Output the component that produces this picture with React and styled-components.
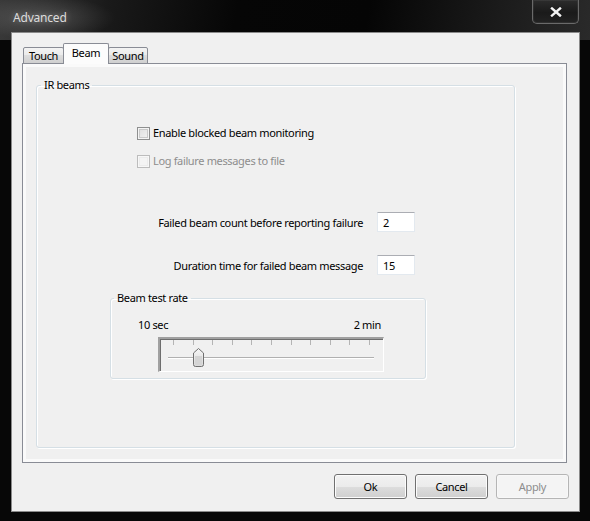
import React from "react";
import styled, { createGlobalStyle } from "styled-components";

const GlobalStyle = createGlobalStyle`
  html, body { margin: 0; padding: 0; background: #000; }
  body { font-family: "Noto Sans", "Open Sans", sans-serif; font-size: 11px; letter-spacing: -0.35px; color: #000; }
  * { box-sizing: border-box; }
`;

const Frame = styled.div`
  width: 590px;
  height: 521px;
  display: flex;
  flex-direction: column;
  padding: 0 10px 9px 11px;
  background:
    radial-gradient(ellipse 70px 22px at 45px 18px, rgba(255,255,255,0.16), rgba(255,255,255,0) 100%),
    linear-gradient(100deg, #3a3a3a 0%, #1a1a1a 18%, #060606 40%, #050505 62%, #1c1c1c 85%, #2a2a2a 100%) top / 100% 40px no-repeat,
    #070707;
`;

const TitleBar = styled.div`
  height: 32px;
  display: flex;
  align-items: flex-start;
  justify-content: space-between;
  padding: 0 1px 0 2px;
`;

const Title = styled.div`
  margin-top: 10px;
  font-size: 12px;
  line-height: 16px;
  letter-spacing: -0.2px;
  color: #dcdcdc;
  text-shadow: 0 0 6px rgba(255,255,255,0.35);
`;

const CloseButton = styled.div`
  width: 47px;
  height: 24px;
  display: flex;
  align-items: center;
  justify-content: center;
  border: 1px solid #6a6a6a;
  border-top: none;
  border-radius: 0 0 5px 5px;
  background: linear-gradient(#2c2c2c, #1a1a1a 55%, #232323);
  box-shadow: inset 0 0 0 1px rgba(255,255,255,0.06);
`;

const Client = styled.div`
  flex: 1;
  display: flex;
  flex-direction: column;
  border: 1px solid #8a8a8a;
  background: #f0f0f0;
  padding: 10px 12px 12px 10px;
`;

const TabStrip = styled.div`
  height: 21px;
  display: flex;
  align-items: flex-end;
  padding-left: 1px;
  position: relative;
  z-index: 1;
  margin-bottom: -1px;
`;

const Tab = styled.div`
  width: ${p => p.$w}px;
  height: ${p => (p.$active ? 21 : 17)}px;
  margin-left: ${p => (p.$first ? 0 : -1)}px;
  border: 1px solid #898c95;
  border-bottom: ${p => (p.$active ? "none" : "1px solid #898c95")};
  border-radius: 2px 2px 0 0;
  background: ${p =>
    p.$active
      ? "#fcfcfc"
      : "linear-gradient(#f3f3f3, #ebebeb 45%, #dddddd 50%, #cfcfcf)"};
  display: flex;
  justify-content: center;
  align-items: ${p => (p.$active ? "flex-start" : "center")};
  padding-top: ${p => (p.$active ? 2 : 0)}px;
  font-size: 11px;
  line-height: 14px;
  position: relative;
  z-index: ${p => (p.$active ? 2 : 1)};
`;

const Panel = styled.div`
  height: 400px;
  display: flex;
  flex-direction: column;
  border: 1px solid #898c95;
  background: #f0f0f0;
  box-shadow: inset 0 0 0 3px #fafafa;
  padding: 14px 51px 14px 13px;
`;

const GroupBox = styled.fieldset`
  margin: 0;
  padding: 0;
  min-width: 0;
  border: 1px solid #d5dfe5;
  border-radius: 3px;
  box-shadow: 1px 1px 0 #fff, inset 1px 1px 0 #fff;
  display: flex;
  flex-direction: column;
  flex: ${p => (p.$grow ? 1 : "none")};
`;

const Legend = styled.legend`
  margin-left: ${p => p.$offset}px;
  padding: 0 3px;
  font-size: 11px;
  line-height: 14px;
  height: 14px;
`;

const CheckRow = styled.label`
  display: flex;
  align-items: center;
  gap: 3px;
  height: 16px;
  margin-top: ${p => p.$mt}px;
  padding-left: 100px;
  color: ${p => (p.$disabled ? "#8d8d8d" : "#000")};
  line-height: 16px;
`;

const CheckBox = styled.span`
  width: 13px;
  height: 13px;
  border: 1px solid ${p => (p.$disabled ? "#bcbcbc" : "#8e8f8f")};
  background: ${p =>
    p.$disabled
      ? "#f4f4f4"
      : "linear-gradient(135deg, #dcdcdc, #f4f4f4)"};
  box-shadow: inset 0 0 0 1px ${p => (p.$disabled ? "#f7f7f7" : "#f4f4f4")},
    inset 0 0 0 2px ${p => (p.$disabled ? "#ececec" : "#c9c9c9")};
  flex: none;
`;

const FieldRow = styled.div`
  display: flex;
  justify-content: flex-end;
  align-items: center;
  gap: 14px;
  height: 20px;
  margin-top: ${p => p.$mt}px;
  padding-right: 99px;
`;

const TextInput = styled.div`
  width: 38px;
  height: 20px;
  border: 1px solid #e3e9ef;
  border-top-color: #abadb3;
  background: #fff;
  padding-left: 5px;
  display: flex;
  align-items: center;
  font-size: 11px;
`;

const RateGroup = styled(GroupBox)`
  width: 316px;
  margin-left: 73px;
  margin-top: 16px;
  padding-bottom: 6px;
`;

const RangeLabels = styled.div`
  display: flex;
  justify-content: space-between;
  margin-top: 13px;
  padding: 0 44px 0 27px;
  height: 14px;
  line-height: 14px;
`;

const SliderBox = styled.div`
  width: 226px;
  height: 35px;
  margin: 5px 0 0 47px;
  border-style: solid;
  border-width: 2px 1px 1px 2px;
  border-color: #a0a0a0 #fff #fff #a0a0a0;
  box-shadow: inset 1px 1px 0 #6e6e6e;
  background: #f0f0f0;
  display: flex;
`;

const ButtonRow = styled.div`
  display: flex;
  justify-content: flex-end;
  gap: 8px;
  margin: 11px -2px 0 0;
`;

const Button = styled.div`
  width: 73px;
  height: 25px;
  display: flex;
  align-items: center;
  justify-content: center;
  border-radius: 3px;
  border: 1px solid ${p => (p.$disabled ? "#b5b5b5" : "#707070")};
  color: ${p => (p.$disabled ? "#8d8d8d" : "#000")};
  background: ${p =>
    p.$disabled
      ? "#f4f4f4"
      : "linear-gradient(#f2f2f2, #ebebeb 50%, #dddddd 51%, #cfcfcf)"};
  box-shadow: inset 0 0 0 1px ${p => (p.$disabled ? "#f8f8f8" : "#fcfcfc")};
  font-size: 11px;
`;

const ticks = Array.from({ length: 11 }, (_, i) => 13 + i * 19.6);

function SliderTrack() {
  return (
    <svg width="223" height="32" viewBox="0 0 223 32">
      <defs>
        <linearGradient id="thumb" x1="0" y1="0" x2="0" y2="1">
          <stop offset="0" stopColor="#f6f6f6" />
          <stop offset="1" stopColor="#d8d8d8" />
        </linearGradient>
      </defs>
      {ticks.map(x => (
        <line key={x} x1={Math.round(x) + 0.5} y1="1" x2={Math.round(x) + 0.5} y2="6" stroke="#b4b4b4" strokeWidth="1" />
      ))}
      <line x1="8" y1="18.5" x2="214" y2="18.5" stroke="#b0b0b0" />
      <line x1="8" y1="19.5" x2="214" y2="19.5" stroke="#ffffff" />
      <path d="M33.5 14 L38.5 9.5 L43.5 14 L43.5 25.5 Q43.5 27.5 41.5 27.5 L35.5 27.5 Q33.5 27.5 33.5 25.5 Z" fill="url(#thumb)" stroke="#6f6f6f" />
      <rect x="35" y="17" width="7" height="9" fill="#d4d4d4" />
    </svg>
  );
}

export default function App() {
  return (
    <>
      <GlobalStyle />
      <Frame>
        <TitleBar>
          <Title>Advanced</Title>
          <CloseButton>
            <svg width="12" height="10" viewBox="0 0 12 10">
              <path d="M2 1.5 L10 8.5 M10 1.5 L2 8.5" stroke="#f4f4f4" strokeWidth="2.4" strokeLinecap="square" />
            </svg>
          </CloseButton>
        </TitleBar>
        <Client>
          <TabStrip>
            <Tab $w={41} $first>Touch</Tab>
            <Tab $w={46} $active>Beam</Tab>
            <Tab $w={40}>Sound</Tab>
          </TabStrip>
          <Panel>
            <GroupBox $grow>
              <Legend $offset={4}>IR beams</Legend>
              <CheckRow $mt={33}>
                <CheckBox />
                Enable blocked beam monitoring
              </CheckRow>
              <CheckRow $mt={12} $disabled>
                <CheckBox $disabled />
                Log failure messages to file
              </CheckRow>
              <FieldRow $mt={43}>
                <span>Failed beam count before reporting failure</span>
                <TextInput>2</TextInput>
              </FieldRow>
              <FieldRow $mt={23}>
                <span>Duration time for failed beam message</span>
                <TextInput>15</TextInput>
              </FieldRow>
              <RateGroup>
                <Legend $offset={3}>Beam test rate</Legend>
                <RangeLabels>
                  <span>10 sec</span>
                  <span>2 min</span>
                </RangeLabels>
                <SliderBox>
                  <SliderTrack />
                </SliderBox>
              </RateGroup>
            </GroupBox>
          </Panel>
          <ButtonRow>
            <Button>Ok</Button>
            <Button>Cancel</Button>
            <Button $disabled>Apply</Button>
          </ButtonRow>
        </Client>
      </Frame>
    </>
  );
}
